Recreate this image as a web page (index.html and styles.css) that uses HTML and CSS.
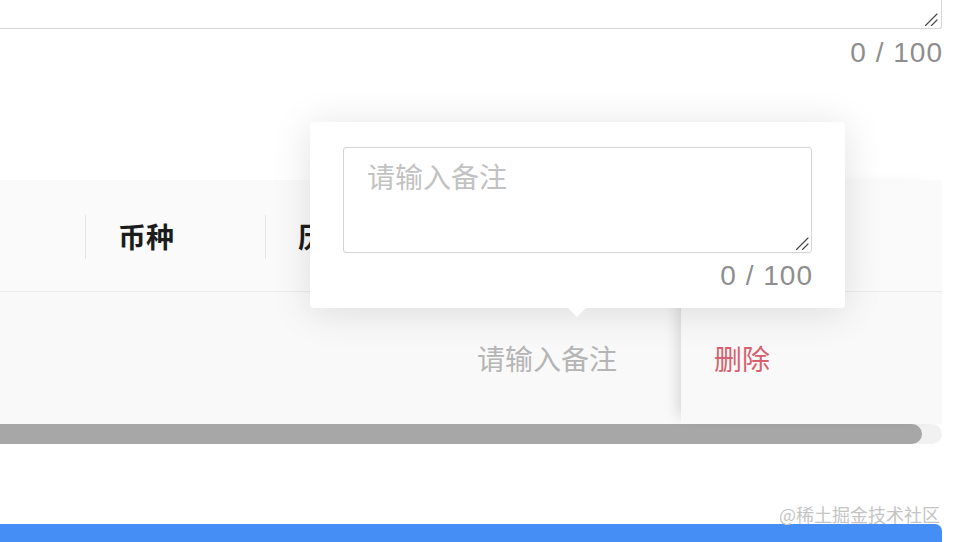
FILE: index.html
```html
<!DOCTYPE html>
<html lang="zh-CN">
<head>
<meta charset="utf-8">
<title>备注</title>
<link rel="stylesheet" href="styles.css">
</head>
<body>
<div class="page">
  <div class="input-wrap">
    <textarea class="top-input" aria-label="备注"></textarea>
    <svg class="grip top-grip" width="14" height="14" viewBox="0 0 14 14" aria-hidden="true">
      <path d="M1.5 13.5 L13 2 M7.5 13.5 L13 8" stroke="#4a4a4a" stroke-width="1.2" fill="none" stroke-linecap="round"/>
    </svg>
  </div>
  <div class="count top-count">0 / 100</div>

  <div class="table">
    <div class="scroll-part">
      <div class="thead">
        <div class="th col1"></div>
        <div class="th col2 sep">币种</div>
        <div class="th col3 sep">历史汇率</div>
      </div>
      <div class="tbody">
        <div class="td col1"></div>
        <div class="td col2"></div>
        <div class="td col3 remark">请输入备注</div>
      </div>
    </div>
    <div class="fixed-part">
      <div class="th fixed-th"></div>
      <div class="td fixed-td"><span class="danger">删除</span></div>
    </div>
  </div>

  <div class="scrollbar"><div class="thumb"></div></div>

  <div class="bottom-bar"></div>

  <div class="popover">
    <div class="input-wrap">
      <textarea class="pop-input" placeholder="请输入备注"></textarea>
      <svg class="grip pop-grip" width="14" height="14" viewBox="0 0 14 14" aria-hidden="true">
        <path d="M1.5 13.5 L13 2 M7.5 13.5 L13 8" stroke="#4a4a4a" stroke-width="1.2" fill="none" stroke-linecap="round"/>
      </svg>
    </div>
    <div class="count pop-count">0 / 100</div>
    <div class="arrow"></div>
  </div>

  <div class="watermark">@稀土掘金技术社区</div>
</div>
</body>
</html>
```

FILE: styles.css
```css
html, body {
  margin: 0;
  padding: 0;
  overflow: hidden;
  background: #ffffff;
  height: 542px;
}

.page {
  position: relative;
  width: 942px;
  font-family: "Liberation Sans", "Noto Sans CJK SC", sans-serif;
  font-size: 28px;
  color: #333;
}

.input-wrap {
  position: relative;
}

.grip {
  position: absolute;
  pointer-events: none;
}

.top-grip {
  right: 4px;
  bottom: 3px;
}

.pop-grip {
  right: 3px;
  bottom: 3px;
}

.top-input {
  display: block;
  box-sizing: border-box;
  width: 942px;
  height: 29px;
  margin: 0;
  border: 1px solid #d6d6d6;
  border-top: none;
  border-left: none;
  border-radius: 0 0 3px 0;
  resize: none;
  background: #fff;
  outline: none;
}

.count {
  color: #8e8e8e;
  line-height: 40px;
  text-align: right;
  letter-spacing: 1px;
  margin-right: -1px;
}

.top-count {
  margin-top: 4px;
}

.table {
  display: flex;
  margin-top: 107px;
  background: #fafafa;
}

.scroll-part {
  flex: 1;
  display: flex;
  flex-direction: column;
}

.thead, .tbody {
  display: flex;
}

.th {
  box-sizing: border-box;
  height: 112px;
  border-bottom: 1px solid #ececec;
  display: flex;
  align-items: center;
  padding-left: 33px;
  font-weight: 700;
  color: #1c1c1c;
  background: #fafafa;
  white-space: nowrap;
  overflow: hidden;
}

.td {
  box-sizing: border-box;
  height: 132px;
  display: flex;
  align-items: center;
  background: #f9f9f9;
}

.col1 { width: 85px; }
.col2 { width: 180px; }
.col3 { flex: 1; }

.sep {
  position: relative;
}
.sep::before {
  content: "";
  position: absolute;
  left: 0;
  top: 35px;
  height: 44px;
  width: 1px;
  background: #e4e4e4;
}

.remark {
  justify-content: flex-end;
  padding-right: 64px;
  color: #b5b5b5;
}

.fixed-part {
  width: 261px;
  display: flex;
  flex-direction: column;
  box-shadow: -10px 0 14px -8px rgba(0, 0, 0, 0.16);
  position: relative;
}

.fixed-td {
  padding-left: 33px;
}

.danger {
  color: #d6606d;
}

.scrollbar {
  height: 20px;
  background: #f1f1f1;
  border-radius: 0 10px 10px 0;
}

.thumb {
  width: 922px;
  height: 20px;
  background: #a7a7a7;
  border-radius: 0 10px 10px 0;
}

.bottom-bar {
  margin-top: 80px;
  height: 30px;
  background: #448ef5;
  border-radius: 0 7px 0 0;
}

.popover {
  position: absolute;
  left: 310px;
  top: 122px;
  width: 535px;
  box-sizing: border-box;
  padding: 25px 33px 12px 33px;
  background: #fff;
  border-radius: 4px;
  box-shadow: 0 4px 40px rgba(0, 0, 0, 0.12);
  z-index: 2;
}

.pop-input {
  display: block;
  box-sizing: border-box;
  width: 469px;
  height: 106px;
  margin: 0;
  padding: 10px 23px;
  border: 1px solid #d4d4d4;
  border-radius: 3px;
  font-family: "Liberation Sans", "Noto Sans CJK SC", sans-serif;
  font-size: 28px;
  line-height: 42px;
  color: #333;
  resize: none;
  outline: none;
}

.pop-input::placeholder {
  color: #c2c2c2;
}

.pop-count {
  margin-top: 3px;
}

.arrow {
  position: absolute;
  left: 258px;
  bottom: -9px;
  width: 0;
  height: 0;
  border-left: 9px solid transparent;
  border-right: 9px solid transparent;
  border-top: 9px solid #fff;
}

.watermark {
  position: absolute;
  right: 2px;
  top: 503px;
  font-size: 18px;
  line-height: 22px;
  color: #c4c4c4;
  font-family: "Noto Sans CJK SC", sans-serif;
  z-index: 3;
}
```
